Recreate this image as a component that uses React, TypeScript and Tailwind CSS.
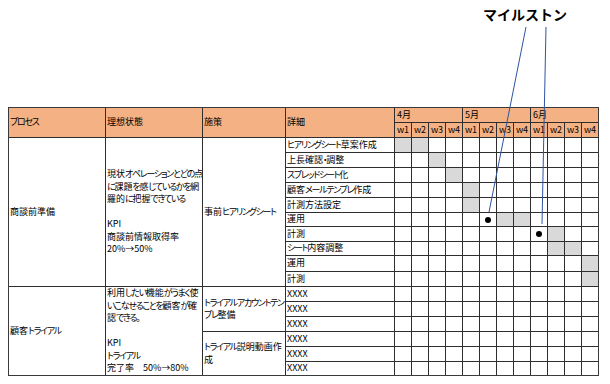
import React from "react";

type Task = { label: string; fill: number[]; dot?: number };
type Measure = { name: string[]; span: string; tasks: Task[] };
type Section = { process: string; ideal: string[]; span: string; measures: Measure[] };

const weeks = ["w1", "w2", "w3", "w4", "w1", "w2", "w3", "w4", "w1", "w2", "w3", "w4"];
const months = ["4月", "5月", "6月"];

const xxxx = (): Task => ({ label: "XXXX", fill: [] });

const sections: Section[] = [
  {
    process: "商談前準備",
    span: "row-span-10",
    ideal: [
      "現状オペレーションとどの点",
      "に課題を感じているかを網",
      "羅的に把握できている",
      "",
      "KPI",
      "商談前情報取得率",
      "20%→50%",
    ],
    measures: [
      {
        name: ["事前ヒアリングシート"],
        span: "row-span-10",
        tasks: [
          { label: "ヒアリングシート草案作成", fill: [0, 1] },
          { label: "上長確認・調整", fill: [2] },
          { label: "スプレッドシート化", fill: [3] },
          { label: "顧客メールテンプレ作成", fill: [4] },
          { label: "計測方法設定", fill: [4] },
          { label: "運用", fill: [6, 7], dot: 5 },
          { label: "計測", fill: [9], dot: 8 },
          { label: "シート内容調整", fill: [9, 10] },
          { label: "運用", fill: [11] },
          { label: "計測", fill: [11] },
        ],
      },
    ],
  },
  {
    process: "顧客トライアル",
    span: "row-span-6",
    ideal: [
      "利用したい機能がうまく使",
      "いこなせることを顧客が確",
      "認できる。",
      "",
      "KPI",
      "トライアル",
      "完了率　50%→80%",
    ],
    measures: [
      { name: ["トライアルアカウントテン", "プレ整備"], span: "row-span-3", tasks: [xxxx(), xxxx(), xxxx()] },
      { name: ["トライアル説明動画作", "成"], span: "row-span-3", tasks: [xxxx(), xxxx(), xxxx()] },
    ],
  },
];

function Jp({ text }: { text: string }) {
  const parts = text.split(/([\u3040-\u30ff]+)/);
  return (
    <>
      {parts.map((p, i) =>
        /^[\u3040-\u30ff]+$/.test(p) ? (
          <span key={i} className="tracking-[-1.3px]">
            {p}
          </span>
        ) : (
          <span key={i}>{p}</span>
        )
      )}
    </>
  );
}

function TaskRow({ task }: { task: Task }) {
  return (
    <>
      <div className="flex items-center overflow-hidden whitespace-nowrap bg-white pl-px">
        <Jp text={task.label} />
      </div>
      {weeks.map((_, i) => (
        <div
          key={i}
          className={`flex items-center justify-center ${task.fill.includes(i) ? "bg-[#d9d9d9]" : "bg-white"}`}
        >
          {task.dot === i && <div className="h-[6px] w-[6px] rounded-full bg-black" />}
        </div>
      ))}
    </>
  );
}

export default function App() {
  return (
    <div className="relative h-[384px] w-[610px] overflow-hidden bg-white text-black [font-family:'Noto_Sans_CJK_JP',sans-serif]">
      <div className="h-[107px] pl-[483px] pt-[7px] text-[14px] font-bold leading-[14px]">マイルストン</div>

      <div className="ml-2 grid w-max grid-cols-[96px_96px_82px_108px_repeat(12,16px)] grid-rows-[14px_14px_14px_14px_14px_14px_14px_13px_14px_13px_15px_14px_14px_14px_14px_14px_14px_13px] gap-px border border-[#3a3a3a] bg-[#2e2e2e] text-[9px] leading-[12.5px] text-black [font-feature-settings:'palt']">
        {["プロセス", "理想状態", "施策", "詳細"].map((h) => (
          <div key={h} className="row-span-2 flex items-center bg-[#f4b183] pl-px">
            <Jp text={h} />
          </div>
        ))}
        {months.map((m) => (
          <div key={m} className="col-span-4 flex items-center bg-[#f4b183] pl-[2px]">
            {m}
          </div>
        ))}
        {weeks.map((w, i) => (
          <div key={i} className="flex items-center justify-center bg-[#f4b183]">
            {w}
          </div>
        ))}

        {sections.map((s) => (
          <React.Fragment key={s.process}>
            <div className={`${s.span} flex items-center overflow-hidden bg-white pl-px`}>
              <Jp text={s.process} />
            </div>
            <div className={`${s.span} flex flex-col justify-center overflow-hidden whitespace-nowrap bg-white pl-px`}>
              {s.ideal.map((line, i) => (
                <div key={i} className="h-[12.6px]">
                  <Jp text={line} />
                </div>
              ))}
            </div>
            {s.measures.map((m, mi) => (
              <React.Fragment key={mi}>
                <div className={`${m.span} flex flex-col justify-center overflow-hidden whitespace-nowrap bg-white pl-px`}>
                  {m.name.map((n) => (
                    <div key={n}>
                      <Jp text={n} />
                    </div>
                  ))}
                </div>
                {m.tasks.map((t, ti) => (
                  <TaskRow key={ti} task={t} />
                ))}
              </React.Fragment>
            ))}
          </React.Fragment>
        ))}
      </div>

      <svg className="pointer-events-none absolute inset-0" width="610" height="384" viewBox="0 0 610 384">
        <line x1="526" y1="27" x2="489" y2="212" stroke="#2f55a4" strokeWidth="1" />
        <line x1="546" y1="27" x2="542" y2="224" stroke="#2f55a4" strokeWidth="1" />
      </svg>
    </div>
  );
}
